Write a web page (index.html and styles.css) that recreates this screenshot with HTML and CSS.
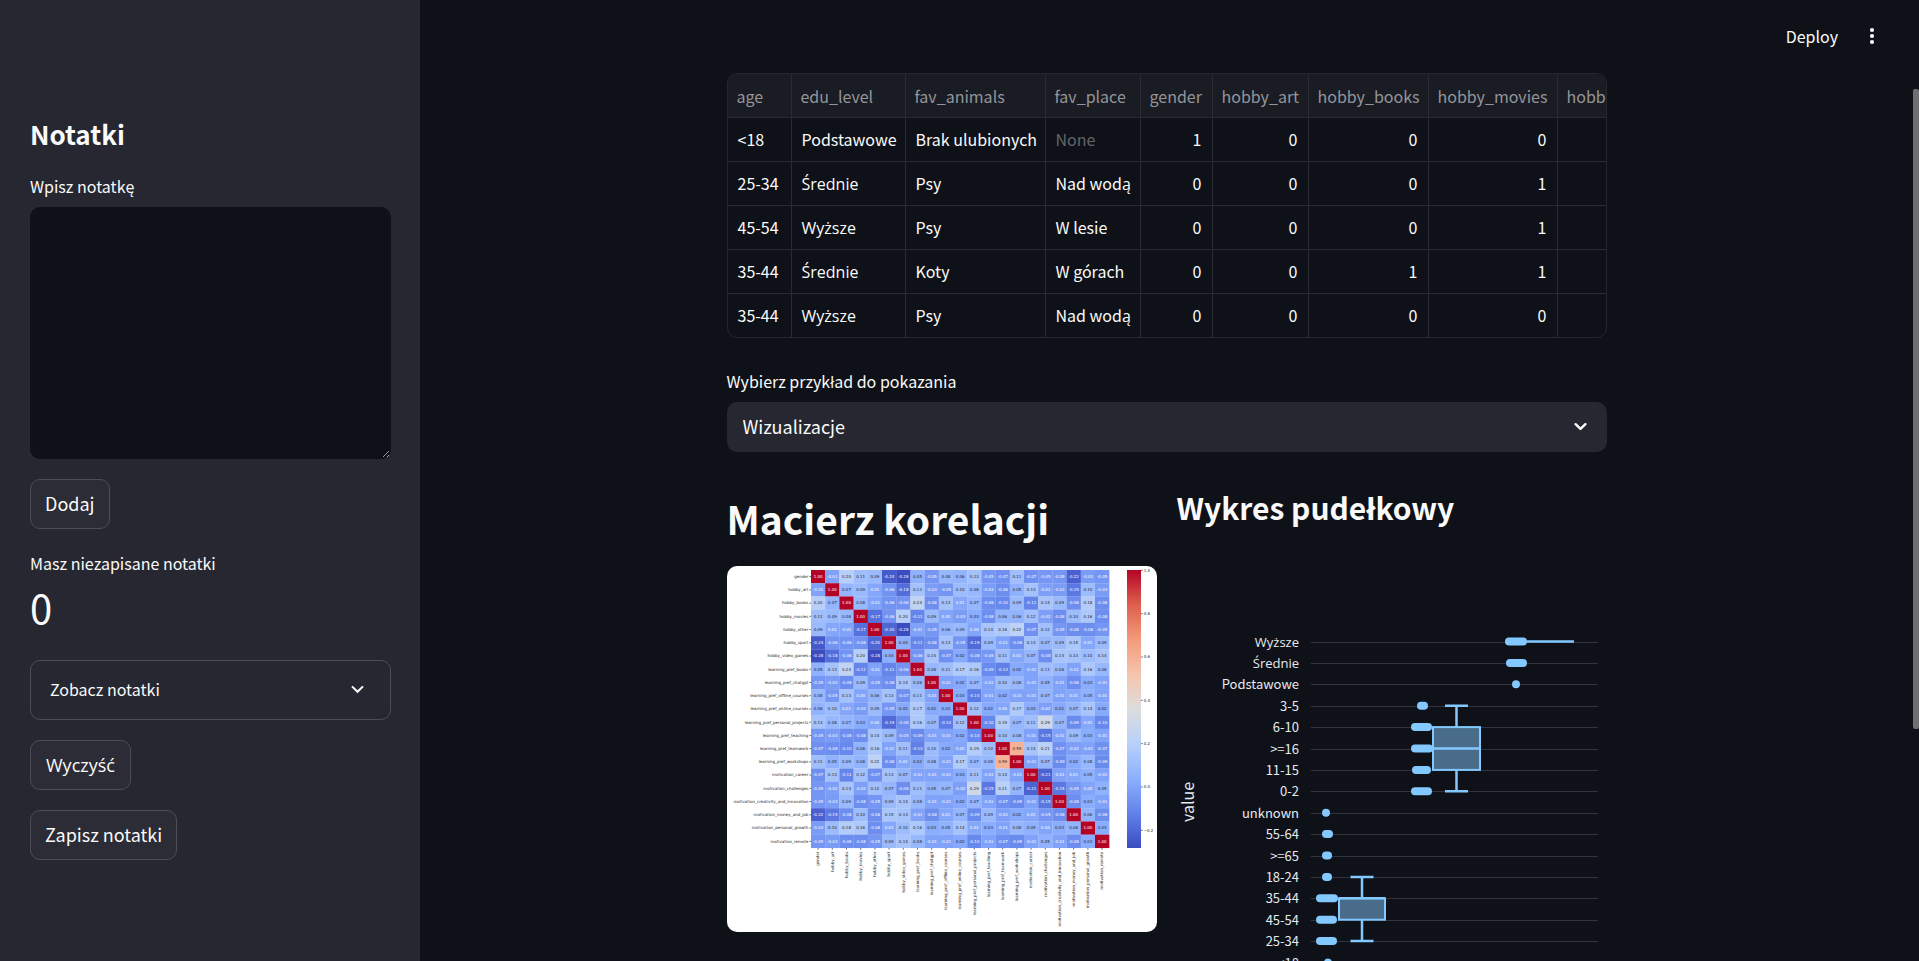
FILE: index.html
```html
<!DOCTYPE html>
<html lang="pl">
<head>
<meta charset="utf-8">
<title>Notatki</title>
<link rel="stylesheet" href="styles.css">
</head>
<body>
<div class="app">
  <aside class="sidebar">
    <h2 class="sidebar-title">Notatki</h2>
    <label class="field-label" for="note">Wpisz notatkę</label>
    <textarea class="note" id="note"></textarea>
    <button class="button" type="button">Dodaj</button>
    <div class="metric">
      <div class="metric-label">Masz niezapisane notatki</div>
      <div class="metric-value">0</div>
    </div>
    <details class="expander">
      <summary class="expander-head">
        <span>Zobacz notatki</span>
        <svg class="chevron" viewBox="0 0 24 24" aria-hidden="true"><path d="M6.700 9l5.300 5.200L17.300 9"/></svg>
      </summary>
    </details>
    <button class="button accented" type="button">Wyczyść</button>
    <button class="button" type="button">Zapisz notatki</button>
  </aside>

  <main class="main">
    <header class="toolbar">
      <button class="toolbar-button" type="button">Deploy</button>
      <button class="toolbar-button" type="button" aria-label="Menu">
        <svg class="dots" viewBox="0 0 24 24"><circle cx="12" cy="6" r="2.1"/><circle cx="12" cy="12" r="2.1"/><circle cx="12" cy="18" r="2.1"/></svg>
      </button>
    </header>

    <div class="content">
      <div class="frame">
        <table class="data">
          <colgroup><col class="c-age"><col class="c-edu"><col class="c-animals"><col class="c-place"><col class="c-gender"><col class="c-art"><col class="c-books"><col class="c-movies"><col class="c-rest"></colgroup>
          <thead>
            <tr><th>age</th><th>edu_level</th><th>fav_animals</th><th>fav_place</th><th>gender</th><th>hobby_art</th><th>hobby_books</th><th>hobby_movies</th><th>hobby_other</th></tr>
          </thead>
          <tbody>
            <tr><td>&lt;18</td><td>Podstawowe</td><td>Brak ulubionych</td><td class="none">None</td><td class="num">1</td><td class="num">0</td><td class="num">0</td><td class="num">0</td><td></td></tr>
            <tr><td>25-34</td><td class="accented">Średnie</td><td>Psy</td><td>Nad wodą</td><td class="num">0</td><td class="num">0</td><td class="num">0</td><td class="num">1</td><td></td></tr>
            <tr><td>45-54</td><td class="accented">Wyższe</td><td>Psy</td><td>W lesie</td><td class="num">0</td><td class="num">0</td><td class="num">0</td><td class="num">1</td><td></td></tr>
            <tr><td>35-44</td><td class="accented">Średnie</td><td>Koty</td><td>W górach</td><td class="num">0</td><td class="num">0</td><td class="num">1</td><td class="num">1</td><td></td></tr>
            <tr><td>35-44</td><td class="accented">Wyższe</td><td>Psy</td><td>Nad wodą</td><td class="num">0</td><td class="num">0</td><td class="num">0</td><td class="num">0</td><td></td></tr>
          </tbody>
        </table>
      </div>

      <label class="field-label" for="example">Wybierz przykład do pokazania</label>
      <div class="select-wrap">
        <select class="select" id="example"><option>Wizualizacje</option></select>
        <svg class="chevron select-chevron" viewBox="0 0 24 24" aria-hidden="true"><path stroke-width="2.4" stroke-linecap="round" stroke-linejoin="round" d="M7.300 9.800l4.700 4.400 4.700-4.400"/></svg>
      </div>

      <div class="columns">
        <section>
          <h1 class="matrix-title">Macierz korelacji</h1>
          <svg class="heatmap" id="heatmap" viewBox="0 0 1290 1098" role="img" aria-label="Macierz korelacji">
            <defs><linearGradient id="scale" x1="0" y1="1" x2="0" y2="0"></linearGradient></defs>
          </svg>
        </section>
        <section>
          <h2 class="box-title">Wykres pudełkowy</h2>
          <svg class="boxplot" id="boxplot" viewBox="0 0 430 450" role="img" aria-label="Wykres pudełkowy"></svg>
        </section>
      </div>
    </div>
    <div class="scroll-thumb"></div>
  </main>
</div>
<script src="script.js"></script>
</body>
</html>
```
FILE: styles.css
```css
* { box-sizing: border-box; }

body {
  margin: 0;
  background: #0e1117;
  color: #fafafa;
  font: 16px/24px "Noto Sans CJK JP", "Open Sans", sans-serif;
}

h1, h2 { margin: 0; font-weight: 700; }

button, select, textarea { font: inherit; color: inherit; }

.app { display: flex; height: 100vh; }

.sidebar {
  flex: 0 0 420px;
  padding: 116px 29px 0 30px;
  background: #262730;
  overflow: hidden;
}

.sidebar-title { margin-bottom: 22px; font-size: 26px; line-height: 36px; }

.field-label { display: block; margin-bottom: 9px; }

.note {
  display: block;
  width: 100%;
  height: 252px;
  padding: 12px 16px;
  border: 1px solid #0e1117;
  border-radius: 10px;
  background: #0e1117;
  resize: vertical;
  outline: none;
}

.button {
  display: block;
  height: 50px;
  margin-top: 20px;
  padding: 0 14px 2px;
  border: 1px solid #4c4d55;
  border-radius: 10px;
  background: #2b2c36;
  font-size: 18px;
}

.accented { font-family: "Open Sans", sans-serif; }
.button.accented { padding: 0 15px; }

.metric { margin: 20px 0; }
.metric-label { line-height: 28px; }
.metric-value { padding-bottom: 3px; font-size: 40px; line-height: 60px; }

.expander {
  border: 1px solid #4c4d55;
  border-radius: 10px;
}

.expander-head {
  display: flex;
  align-items: center;
  justify-content: space-between;
  height: 58px;
  padding: 0 20px 2px 19px;
  list-style: none;
  cursor: pointer;
}

.chevron {
  width: 25px;
  height: 25px;
  fill: none;
  stroke: #fafafa;
  stroke-width: 2;
}

.main { position: relative; flex: 1; min-width: 0; padding-right: 6px; overflow: hidden; }

.toolbar {
  display: flex;
  align-items: center;
  justify-content: flex-end;
  gap: 22px;
  height: 73px;
  padding: 0 29px 2px 0;
}

.toolbar-button {
  display: flex;
  padding: 0;
  border: 0;
  background: none;
}

.dots { width: 24px; height: 24px; fill: #fafafa; }

.scroll-thumb {
  position: absolute;
  top: 89px;
  right: 0;
  width: 6px;
  height: 640px;
  border-radius: 2px;
  background: #6e6f73;
}

.content { width: calc(100% - 60px); max-width: 880px; margin: 0 auto; }

.frame {
  margin-bottom: 31px;
  border: 1px solid #26272e;
  border-radius: 10px;
  overflow: hidden;
}

.data { width: 980px; table-layout: fixed; border-spacing: 0; }
.c-age { width: 64px; }
.c-edu { width: 114px; }
.c-animals { width: 140px; }
.c-place { width: 95px; }
.c-gender { width: 72px; }
.c-art { width: 96px; }
.c-books { width: 120px; }
.c-movies { width: 129px; }
.c-rest { width: 150px; }

.data th, .data td {
  height: 44px;
  padding: 0 0 2px 10px;
  border: solid #2a2b31;
  border-width: 0 1px 1px 0;
  text-align: left;
  font-weight: 400;
  white-space: nowrap;
}
.data th { padding-bottom: 0; padding-left: 9px; background: #1a1c23; color: #94959a; }
.data tbody tr:last-child td { border-bottom: 0; }
.data tbody tr:last-child td { height: 43px; }
.data .num { padding: 0 10px 2px 0; text-align: right; }
.data .none { color: #636569; }
.data .accented { padding-bottom: 0; }

.select-wrap { position: relative; }

.select {
  display: block;
  width: 100%;
  height: 50px;
  padding: 0 50px 2px 16px;
  border: 0;
  border-radius: 10px;
  background: #262730;
  font-size: 18px;
  appearance: none;
}

.select-chevron { position: absolute; top: 12px; right: 14px; pointer-events: none; }

.columns {
  display: grid;
  grid-template-columns: 1fr 1fr;
  gap: 20px;
  margin-top: 20px;
}

.matrix-title { padding: 21px 0 23px; font-size: 39px; line-height: 50px; }
.box-title { padding: 17px 0 16px; font-size: 30px; line-height: 36px; }

.heatmap { display: block; width: 100%; border-radius: 10px; background: #fff; font: 12px "DejaVu Sans", sans-serif; }
.heatmap .dark { fill: #262626; }
.heatmap .light { fill: #fff; }
.heatmap .tick { stroke: #262626; stroke-width: 2; }
.mid { text-anchor: middle; }
.end { text-anchor: end; }

.boxplot { display: block; width: 100%; font-size: 13px; fill: #e6eaf1; }
.boxplot .grid { stroke: #31333f; stroke-width: 1; }
.boxplot .box { fill: #486c89; stroke: #83c9ff; stroke-width: 2; }
.boxplot .whisker { stroke: #83c9ff; }
.boxplot .point { fill: #83c9ff; }
.boxplot .axis { font-size: 16px; }
```
FILE: script.js
```js
const NS = 'http://www.w3.org/2000/svg';

function add(parent, tag, attrs, text) {
  const el = document.createElementNS(NS, tag);
  for (const key in attrs) el.setAttribute(key, attrs[key]);
  if (text !== undefined) el.textContent = text;
  parent.append(el);
  return el;
}

/* Correlation matrix: upper triangle, in hundredths */
const names = ['gender', 'hobby_art', 'hobby_books', 'hobby_movies', 'hobby_other', 'hobby_sport',
  'hobby_video_games', 'learning_pref_books', 'learning_pref_chatgpt', 'learning_pref_offline_courses',
  'learning_pref_online_courses', 'learning_pref_personal_projects', 'learning_pref_teaching',
  'learning_pref_teamwork', 'learning_pref_workshops', 'motivation_career', 'motivation_challenges',
  'motivation_creativity_and_innovation', 'motivation_money_and_job', 'motivation_personal_growth',
  'motivation_remote'];
const upper = [
  [100, -1, 20, 11, 9, -24, -28, 5, -5, 8, 6, 13, -5, -7, 11, -7, -5, -5, -22, -3, -5],
  [100, 7, 9, 1, -6, -18, 13, -3, -5, 10, 8, -3, -8, 5, 13, -2, -3, -15, 10, -3],
  [100, 8, -1, -6, -6, 24, -8, 13, 1, 7, -8, -10, 9, -11, 14, 9, -8, 18, -8],
  [100, -17, -6, 20, -11, 9, 0, -3, 3, -8, 6, 6, 12, -2, -8, 10, 16, -8],
  [100, -20, -28, -1, -5, 6, 9, 0, 14, 16, 22, -7, 12, -5, -8, -8, -5],
  [100, 4, -11, -8, 13, -5, -19, 9, -1, -8, 13, 7, 9, 15, 1, 9],
  [100, -6, 14, -7, 2, -8, -5, 11, 1, 7, -8, 14, 13, 10, 14],
  [100, 8, 11, 17, 16, -9, -13, 2, -1, 11, 8, -1, 16, 8],
  [100, -1, 2, 7, -1, 10, 8, -1, 5, -1, -8, 3, -1],
  [100, 3, -14, -1, 2, -1, -1, 7, -1, 1, 5, -1],
  [100, 12, 2, 0, 17, 3, -2, 2, 7, 14, 2],
  [100, -10, 19, 7, 11, 29, 7, -9, 1, -10],
  [100, 10, 8, -1, -15, -1, 9, 3, -1],
  [100, 59, 14, 21, -7, -2, -1, -7],
  [100, -1, 7, -9, 2, 8, -9],
  [100, -21, -1, 1, 5, -1],
  [100, -15, -5, 0, 5],
  [100, -8, 3, -1],
  [100, 6, -8],
  [100, 3],
  [100]
];
const stops = [[59, 76, 192], [98, 130, 234], [141, 176, 254], [184, 208, 249], [221, 221, 221],
  [245, 196, 173], [244, 154, 123], [222, 96, 77], [180, 4, 38]];

function colour(value) {
  const t = Math.max(0, Math.min(1, (value + 0.28) / 1.28)) * 8;
  const i = Math.min(7, Math.floor(t));
  return stops[i].map((c, k) => Math.round(c + (stops[i + 1][k] - c) * (t - i)));
}

function luminance(rgb) {
  const [r, g, b] = rgb.map(c => (c /= 255) <= 0.03928 ? c / 12.92 : ((c + 0.055) / 1.055) ** 2.4);
  return 0.2126 * r + 0.7152 * g + 0.0722 * b;
}

const map = document.getElementById('heatmap');
const left = 252, top0 = 12, cellW = 42.6, cellH = 39.7;
names.forEach((name, r) => {
  const cy = top0 + (r + 0.5) * cellH;
  const cx = left + (r + 0.5) * cellW;
  names.forEach((_, c) => {
    const v = upper[Math.min(r, c)][Math.abs(r - c)] / 100;
    const rgb = colour(v);
    const x = left + c * cellW;
    add(map, 'rect', { x, y: top0 + r * cellH, width: cellW + 0.5, height: cellH + 0.5, fill: `rgb(${rgb})` });
  });
  names.forEach((_, c) => {
    const v = upper[Math.min(r, c)][Math.abs(r - c)] / 100;
    add(map, 'text', { x: left + (c + 0.5) * cellW, y: cy + 4, class: 'mid ' + (luminance(colour(v)) > 0.408 ? 'dark' : 'light') }, v.toFixed(2));
  });
  add(map, 'text', { x: 244, y: cy + 4, class: 'end dark' }, name);
  add(map, 'path', { d: `M247 ${cy}h5`, class: 'tick' });
  add(map, 'path', { d: `M${cx} 846v5`, class: 'tick' });
  add(map, 'text', { transform: `translate(${cx + 4} 857) rotate(-90)`, class: 'end dark' }, name);
});

const scale = document.getElementById('scale');
stops.forEach((s, i) => add(scale, 'stop', { offset: i / 8, 'stop-color': `rgb(${s})` }));
add(map, 'rect', { x: 1200, y: 12, width: 42, height: 834, fill: 'url(#scale)' });
['1.0', '0.8', '0.6', '0.4', '0.2', '0.0', '−0.2'].forEach((t, i) => {
  const y = 13 + i * 130;
  add(map, 'path', { d: `M1242 ${y}h5`, class: 'tick' });
  add(map, 'text', { x: 1250, y: y + 4, class: 'dark' }, t);
});

/* Box plot: rows top to bottom with the extent of each run of points */
const rows = [
  ['Wyższe', 328, 350], ['Średnie', 329, 350], ['Podstawowe', 335, 343], ['3-5', 240, 251],
  ['6-10', 234, 255], ['>=16', 234, 256], ['11-15', 235, 254], ['0-2', 234, 255],
  ['unknown', 145, 153], ['55-64', 145, 156], ['>=65', 145, 155], ['18-24', 145, 155],
  ['35-44', 139, 161], ['45-54', 139, 160], ['25-34', 139, 160], ['<18', 147, 155]
];
const plot = document.getElementById('boxplot');
const rowY = i => 100.5 + i * 21.4;
rows.forEach(([label], i) => {
  const y = Math.round(rowY(i)) + 0.5;
  add(plot, 'path', { d: `M134 ${y}H421`, class: 'grid' });
  add(plot, 'text', { x: 122, y: rowY(i) + 5, class: i < 2 ? 'end accented' : 'end' }, label);
});
function box(x1, x2, hi, q3, med, q1, lo) {
  const cx = (x1 + x2) / 2;
  add(plot, 'path', { class: 'whisker', 'stroke-width': 2.5, d: `M${cx} ${rowY(hi)}V${rowY(q3)}M${cx} ${rowY(q1)}V${rowY(lo)}M${cx - 11.5} ${rowY(hi)}h23M${cx - 11.5} ${rowY(lo)}h23` });
  add(plot, 'rect', { x: x1, y: rowY(q3), width: x2 - x1, height: rowY(q1) - rowY(q3), class: 'box' });
  add(plot, 'path', { class: 'whisker', 'stroke-width': 2.5, d: `M${x1} ${rowY(med)}H${x2}` });
}
box(256, 303, 3, 4, 5, 6, 7);
box(162, 208, 11, 12, 12, 13, 14);
add(plot, 'path', { d: `M350 ${rowY(0)}H397`, class: 'whisker', 'stroke-width': 2.5 });
rows.forEach(([, x1, x2], i) => {
  add(plot, 'rect', { x: x1, y: rowY(i) - 4, width: x2 - x1, height: 8, rx: 4, class: 'point' });
});
add(plot, 'text', { transform: 'translate(17 261) rotate(-90)', class: 'mid axis' }, 'value');
```
